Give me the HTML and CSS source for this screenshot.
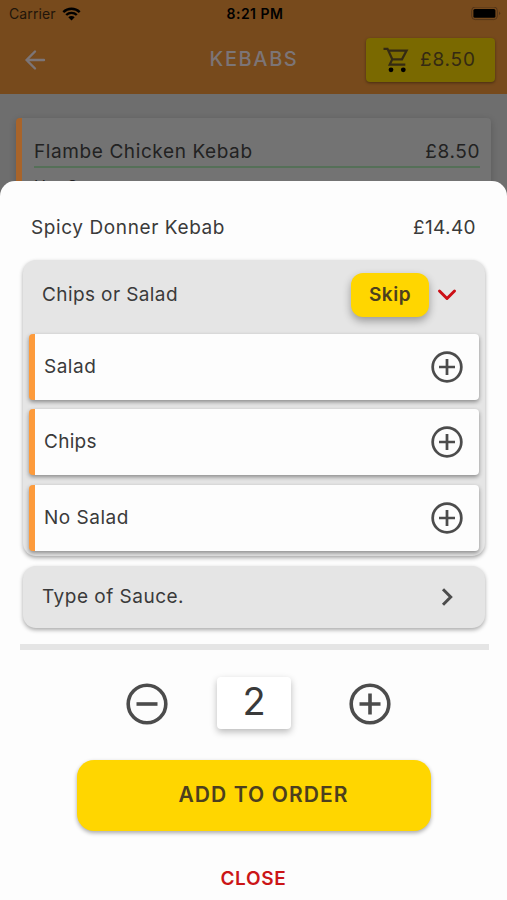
FILE: index.html
```html
<!DOCTYPE html>
<html lang="en">
<head>
<meta charset="utf-8">
<title>Kebabs</title>
<link rel="stylesheet" href="styles.css">
</head>
<body>
<svg width="0" height="0" class="defs">
  <symbol id="plus" viewBox="0 0 42 42"><circle cx="21" cy="21" r="18.8"/><path d="M21 10.500v21M10.500 21h21"/></symbol>
  <symbol id="minus" viewBox="0 0 42 42"><circle cx="21" cy="21" r="18.8"/><path d="M10.500 21h21"/></symbol>
</svg>
<div class="screen">
  <div class="top">
    <div class="status">
      <div class="carrier"><span>Carrier</span>
        <svg width="19" height="14" viewBox="0 0 19 14"><path d="M1.3 5.1a11.7 11.7 0 0 1 16.4 0M4.2 8a7.6 7.6 0 0 1 10.6 0" fill="none" stroke="#000" stroke-width="2.4"/><path d="M6.3 10.3a4.6 4.6 0 0 1 6.4 0L9.5 13.6z"/></svg>
      </div>
      <span class="time">8:21 PM</span>
      <svg class="battery" width="30" height="15" viewBox="0 0 30 15"><rect x=".7" y="0" width="25.6" height="12.6" rx="3.5" fill="none" stroke="#523419"/><rect x="2.4" y="1.9" width="22" height="8.8" rx="1.500"/><path d="M28 4.5q2.4 1.8 0 3.6z" fill="#523419"/></svg>
    </div>
    <header class="bar">
      <svg class="back" width="22" height="22" viewBox="0 0 22 22"><path d="M20 11H2.500M11 2.500L2.500 11l8.500 8.500"/></svg>
      <h1>KEBABS</h1>
      <button class="cart"><svg width="26" height="26" viewBox="0 0 26 26"><path d="M.5 1.800h4l4.800 10.500h9.700l4.600-8.700H5.500M9.300 12.300L6.700 17.600H22.300" fill="none" stroke="#342a13" stroke-width="2.200"/><circle cx="8" cy="22.800" r="2.400"/><circle cx="20.300" cy="22.800" r="2.400"/></svg><span>£8.50</span></button>
    </header>
  </div>
  <main class="list">
    <article class="dish">
      <div class="dish-row"><span class="dish-name">Flambe Chicken Kebab</span><span class="price">£8.50</span></div>
      <p>Hot Sauce</p>
    </article>
  </main>
  <section class="sheet">
    <div class="title"><span class="name">Spicy Donner Kebab</span><span class="total">£14.40</span></div>
    <div class="panel">
      <div class="panel-head"><span class="group">Chips or Salad</span><button class="skip">Skip</button>
        <svg class="down" width="20" height="14" viewBox="0 0 20 14"><path d="M2.500 3L10 10.500 17.500 3"/></svg></div>
      <div class="option"><span>Salad</span><svg class="ring"><use href="#plus"/></svg></div>
      <div class="option"><span class="chips">Chips</span><svg class="ring"><use href="#plus"/></svg></div>
      <div class="option"><span>No Salad</span><svg class="ring"><use href="#plus"/></svg></div>
    </div>
    <div class="panel closed"><span>Type of Sauce.</span><svg width="14" height="20" viewBox="0 0 14 20"><path d="M3 2.300L10.700 10 3 17.700"/></svg></div>
    <hr>
    <div class="quantity"><svg class="ring big"><use href="#minus"/></svg><span class="count">2</span><svg class="ring big"><use href="#plus"/></svg></div>
    <button class="add">ADD TO ORDER</button>
    <button class="close">CLOSE</button>
  </section>
</div>
</body>
</html>
```
FILE: styles.css
```css
* { box-sizing: border-box; }
body { margin: 0; font-family: Inter, "Liberation Sans", sans-serif; color: #3a3a3a; font-size: 19px; line-height: 24px; letter-spacing: .5px; }
button { border: 0; padding: 0; font: inherit; color: inherit; letter-spacing: inherit; }
span, button, h1 { white-space: nowrap; }
.defs { display: block; position: absolute; }
.screen { width: 507px; height: 900px; overflow: hidden; background: #6e6e6e; display: flex; flex-direction: column; }
.top { height: 94px; background: #774a1c; flex: none; }
.status { height: 28px; display: grid; grid-template-columns: 1fr auto 1fr; align-items: center; padding: 0 6px 0 9px; color: #000; }
.carrier { display: flex; gap: 6px; align-items: center; font-size: 14px; color: #21150a; letter-spacing: .1px; }
.time { font-size: 14px; font-weight: 600; letter-spacing: .5px; }
.battery { justify-self: end; }
.bar { height: 66px; display: grid; grid-template-columns: 129px 1fr 129px; align-items: center; padding: 0 12px; }
.back { margin: -2px 0 0 12px; fill: none; stroke: #7c7577; stroke-width: 2.4; stroke-linecap: round; stroke-linejoin: round; }
.bar h1 { margin: -4px 0 0; font-size: 20px; font-weight: 500; text-align: center; color: #7c7577; letter-spacing: 1.6px; text-indent: 1px; }
.cart { height: 44px; margin-bottom: 2px; border-radius: 4px; background: #7a6900; display: flex; align-items: center; padding-left: 17px; gap: 11px; color: #342a13; box-shadow: 0 1px 3px #0006; letter-spacing: .8px; }
.list { padding: 24px 16px 0; }
.dish { height: 120px; border-left: 6px solid #a8642a; border-radius: 4px; background: #737373; box-shadow: 0 2px 7px #0003; padding: 17px 11px 0 12px; color: #222; }
.dish-row { display: flex; justify-content: space-between; align-items: center; height: 33px; padding-top: 2px; border-bottom: 2px solid #557058; }
.dish p { margin: 6px 0 0; font-size: 16px; line-height: 24px; }
.sheet { position: absolute; top: 181px; left: 0; width: 507px; height: 719px; background: #fdfdfd; border-radius: 15px 15px 0 0; padding: 34px 0 0; }
.title { display: flex; justify-content: space-between; padding: 0 31px; height: 45px; line-height: 25px; }
.name, .dish-name, .price { letter-spacing: .6px; }
.total { letter-spacing: .4px; }
.panel { margin: 0 22px 10px 23px; height: 296px; padding: 0 6px; background: #e5e5e5; border-radius: 13px; box-shadow: 0 2px 4px #0005; }
.panel-head { height: 74px; display: flex; align-items: center; padding: 0 22px 4px 13px; }
.panel-head .group { flex: 1; letter-spacing: .4px; }
.skip { width: 78px; height: 44px; background: #ffd600; border-radius: 12px; box-shadow: 0 4px 8px #0005; font-weight: 600; color: #4c3f1e; margin-right: 8px; }
.down, .closed svg { fill: none; stroke: #cc0f16; stroke-width: 3; stroke-linecap: round; stroke-linejoin: round; }
.option { height: 66px; margin-bottom: 9.4px; border-left: 6px solid #fd9b3c; border-radius: 4px; background: #fdfdfd; box-shadow: 0 2px 4px #0006; display: flex; justify-content: space-between; align-items: center; padding: 0 16px 0 9px; }
.chips { letter-spacing: .3px; }
.ring { width: 32px; height: 32px; fill: none; stroke: #4c4c4c; stroke-width: 3.6; }
.closed { height: 62px; display: flex; justify-content: space-between; align-items: center; padding: 0 31px 0 19px; margin-bottom: 16px; }
.closed svg { stroke: #4c4c4c; stroke-linecap: butt; stroke-linejoin: miter; }
hr { margin: 0 18px 0 20px; height: 6px; border: 0; background: #e5e5e5; }
.quantity { height: 110px; display: grid; grid-template-columns: 42px 74px 42px; column-gap: 49px; padding-left: 126px; align-items: center; }
.quantity .ring:last-child { margin-left: 9px; }
.big { width: 42px; height: 42px; margin-top: -2px; }
.count { height: 52px; margin-top: -4px; border-radius: 4px; background: #fff; box-shadow: 0 3px 7px #0004; text-align: center; font-size: 38px; line-height: 48px; letter-spacing: 0; }
.add { display: block; width: 354px; height: 71px; margin-left: 77px; background: #ffd600; border-radius: 17px; box-shadow: 0 2px 4px #0005; font-size: 21px; font-weight: 600; color: #4c3f1e; padding: 0 0 2px 19px; letter-spacing: 1.1px; }
.close { display: block; margin: 36px auto 0; background: none; color: #cb1517; font-weight: 600; letter-spacing: .7px; }
```
